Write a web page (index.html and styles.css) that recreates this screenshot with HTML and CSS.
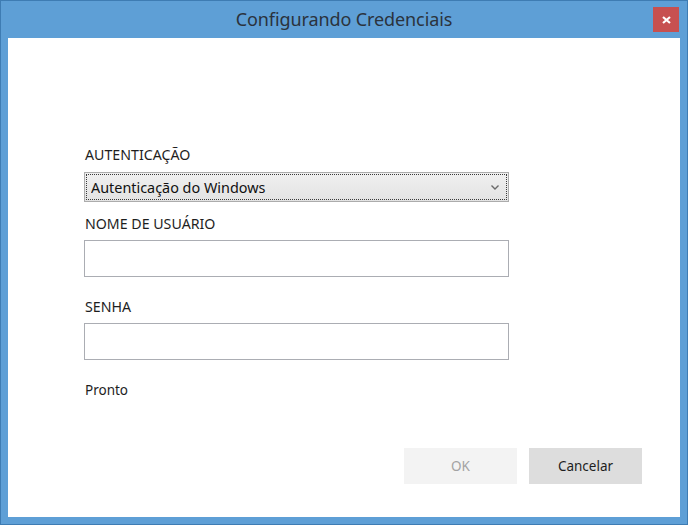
FILE: index.html
```html
<!DOCTYPE html>
<html lang="pt-BR">
<head>
<meta charset="utf-8">
<title>Configurando Credenciais</title>
<link rel="stylesheet" href="styles.css">
</head>
<body>
<div class="window">
  <div class="titlebar">
    <span class="title">Configurando Credenciais</span>
    <button class="close" aria-label="Fechar">
      <svg width="9" height="8" viewBox="0 0 9 8"><path d="M1 1 L8 7 M8 1 L1 7" stroke="#fff" stroke-width="2.2" fill="none"/></svg>
    </button>
  </div>
  <div class="client">
    <div class="form">
      <label class="label label-first">AUTENTICAÇÃO</label>
      <div class="select-wrap">
        <select class="select">
          <option>Autenticação do Windows</option>
        </select>
        <svg class="chevron" width="8" height="5" viewBox="0 0 8 5"><path d="M0.5 0.5 L4 4 L7.5 0.5" stroke="#6a6a6a" stroke-width="1.4" fill="none"/></svg>
      </div>
      <label class="label">NOME DE USUÁRIO</label>
      <input class="input" type="text">
      <label class="label label-gap">SENHA</label>
      <input class="input" type="password">
      <div class="status">Pronto</div>
    </div>
    <div class="buttons">
      <button class="btn btn-ok" disabled>OK</button>
      <button class="btn btn-cancel">Cancelar</button>
    </div>
  </div>
</div>
</body>
</html>
```
FILE: styles.css
```css
* { box-sizing: border-box; }
html, body { margin: 0; padding: 0; }
body {
  width: 688px;
  height: 525px;
  font-family: "Noto Sans", "Open Sans", sans-serif;
  background: #5c9ed6;
}
.window {
  width: 688px;
  height: 525px;
  background: #5e9fd6;
  border: 1px solid #3e7cb3;
  display: flex;
  flex-direction: column;
}
.titlebar {
  height: 37px;
  display: flex;
  align-items: center;
  justify-content: center;
  position: relative;
}
.title {
  font-size: 18px;
  color: #2b333d;
  margin-top: -1px;
  letter-spacing: -0.1px;
}
.close {
  position: absolute;
  top: 6px;
  right: 8px;
  width: 26px;
  height: 25px;
  border: none;
  padding: 0;
  background: #c75050;
  display: flex;
  align-items: center;
  justify-content: center;
}
.client {
  flex: 1;
  margin: 0 7px 7px 7px;
  background: #ffffff;
  display: flex;
  flex-direction: column;
}
.form {
  padding: 107px 0 0 76px;
  display: flex;
  flex-direction: column;
  align-items: flex-start;
}
.label {
  font-size: 14.2px;
  line-height: 20px;
  color: #1e1e1e;
  padding-left: 1px;
}
.label-first { margin-bottom: 7px; }
.select-wrap {
  position: relative;
  width: 425px;
  height: 30px;
  margin-bottom: 12px;
}
.select {
  -webkit-appearance: none;
  appearance: none;
  width: 100%;
  height: 100%;
  border: 1px solid #acacac;
  background: linear-gradient(#f0f0f0, #e3e3e3);
  font-family: inherit;
  font-size: 14.4px;
  color: #111;
  padding: 0 0 0 6px;
  outline: 1px dotted #3a3a3a;
  outline-offset: -3px;
  border-radius: 0;
}
.chevron {
  position: absolute;
  right: 10px;
  top: 13px;
  pointer-events: none;
}
.input {
  width: 425px;
  height: 37px;
  border: 1px solid #abadb3;
  background: #fff;
  margin: 6px 0 0 0;
  padding: 0 6px;
  font-family: inherit;
  font-size: 13.5px;
  border-radius: 0;
}
.label-gap { margin-top: 20px; }
.status {
  margin-top: 20px;
  font-size: 13.5px;
  line-height: 20px;
  color: #1e1e1e;
  padding-left: 1px;
}
.buttons {
  margin-top: auto;
  display: flex;
  justify-content: flex-end;
  gap: 12px;
  padding: 0 38px 33px 0;
}
.btn {
  width: 113px;
  height: 36px;
  border: none;
  font-family: inherit;
  font-size: 13.5px;
  border-radius: 0;
}
.btn-ok {
  background: #f3f3f3;
  color: #a3a3a3;
}
.btn-cancel {
  background: #dddddd;
  color: #1e1e1e;
}
```
